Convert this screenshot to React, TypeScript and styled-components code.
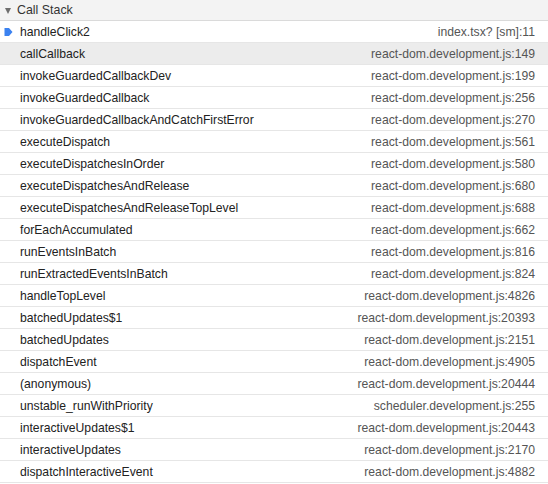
import React from "react";
import styled, { createGlobalStyle } from "styled-components";

const GlobalStyle = createGlobalStyle`
  html, body {
    margin: 0;
    padding: 0;
    background: #fff;
  }
  body {
    font-family: "Liberation Sans", Arial, sans-serif;
  }
`;

type Frame = {
  name: string;
  location: string;
  current?: boolean;
  selected?: boolean;
};

const frames: Frame[] = [
  { name: "handleClick2", location: "index.tsx? [sm]:11", current: true },
  { name: "callCallback", location: "react-dom.development.js:149", selected: true },
  { name: "invokeGuardedCallbackDev", location: "react-dom.development.js:199" },
  { name: "invokeGuardedCallback", location: "react-dom.development.js:256" },
  { name: "invokeGuardedCallbackAndCatchFirstError", location: "react-dom.development.js:270" },
  { name: "executeDispatch", location: "react-dom.development.js:561" },
  { name: "executeDispatchesInOrder", location: "react-dom.development.js:580" },
  { name: "executeDispatchesAndRelease", location: "react-dom.development.js:680" },
  { name: "executeDispatchesAndReleaseTopLevel", location: "react-dom.development.js:688" },
  { name: "forEachAccumulated", location: "react-dom.development.js:662" },
  { name: "runEventsInBatch", location: "react-dom.development.js:816" },
  { name: "runExtractedEventsInBatch", location: "react-dom.development.js:824" },
  { name: "handleTopLevel", location: "react-dom.development.js:4826" },
  { name: "batchedUpdates$1", location: "react-dom.development.js:20393" },
  { name: "batchedUpdates", location: "react-dom.development.js:2151" },
  { name: "dispatchEvent", location: "react-dom.development.js:4905" },
  { name: "(anonymous)", location: "react-dom.development.js:20444" },
  { name: "unstable_runWithPriority", location: "scheduler.development.js:255" },
  { name: "interactiveUpdates$1", location: "react-dom.development.js:20443" },
  { name: "interactiveUpdates", location: "react-dom.development.js:2170" },
  { name: "dispatchInteractiveEvent", location: "react-dom.development.js:4882" },
];

const App: React.FC = () => {
  return (
    <>
      <GlobalStyle />
      <Pane>
        <Header>
          <Triangle />
          <HeaderTitle>Call Stack</HeaderTitle>
        </Header>
        <List>
          {frames.map((f, i) => (
            <Row key={i} selected={!!f.selected}>
              <Marker>{f.current && <CurrentArrow />}</Marker>
              <Name>{f.name}</Name>
              <Location>{f.location}</Location>
            </Row>
          ))}
        </List>
      </Pane>
    </>
  );
};

export default App;

// blue "paused here" marker
const CurrentArrow = () => (
  <svg width="9" height="10" viewBox="0 0 9 10">
    <path d="M0.5 1 H5 L8.5 5 L5 9 H0.5 Z" fill="#3b82f0" />
  </svg>
);

const Pane = styled.div`
  width: 548px;
  background: #fff;
  color: #222;
  font-size: 12.2px;
`;

const Header = styled.div`
  height: 20px;
  display: flex;
  align-items: center;
  background: #f3f3f3;
  border-bottom: 1px solid #dadada;
  padding-left: 5px;
  color: #333;
`;

const Triangle = styled.span`
  width: 0;
  height: 0;
  border-left: 3.5px solid transparent;
  border-right: 3.5px solid transparent;
  border-top: 6px solid #6e6e6e;
  margin-right: 5px;
  margin-top: 1px;
`;

const HeaderTitle = styled.span`
  font-size: 12.4px;
  margin-left: 1px;
`;

const List = styled.div`
  display: flex;
  flex-direction: column;
`;

const Row = styled.div<{ selected: boolean }>`
  height: 21px;
  display: flex;
  align-items: center;
  border-bottom: 1px solid #e6e6e6;
  background: ${(p) => (p.selected ? "#ececec" : "#fff")};
  padding-right: 13px;
`;

const Marker = styled.span`
  width: 20px;
  flex-shrink: 0;
  display: flex;
  align-items: center;
  padding-left: 4px;
  box-sizing: border-box;
`;

const Name = styled.span`
  flex: 1;
  color: #222;
  white-space: nowrap;
`;

const Location = styled.span`
  color: #555;
  white-space: nowrap;
`;
